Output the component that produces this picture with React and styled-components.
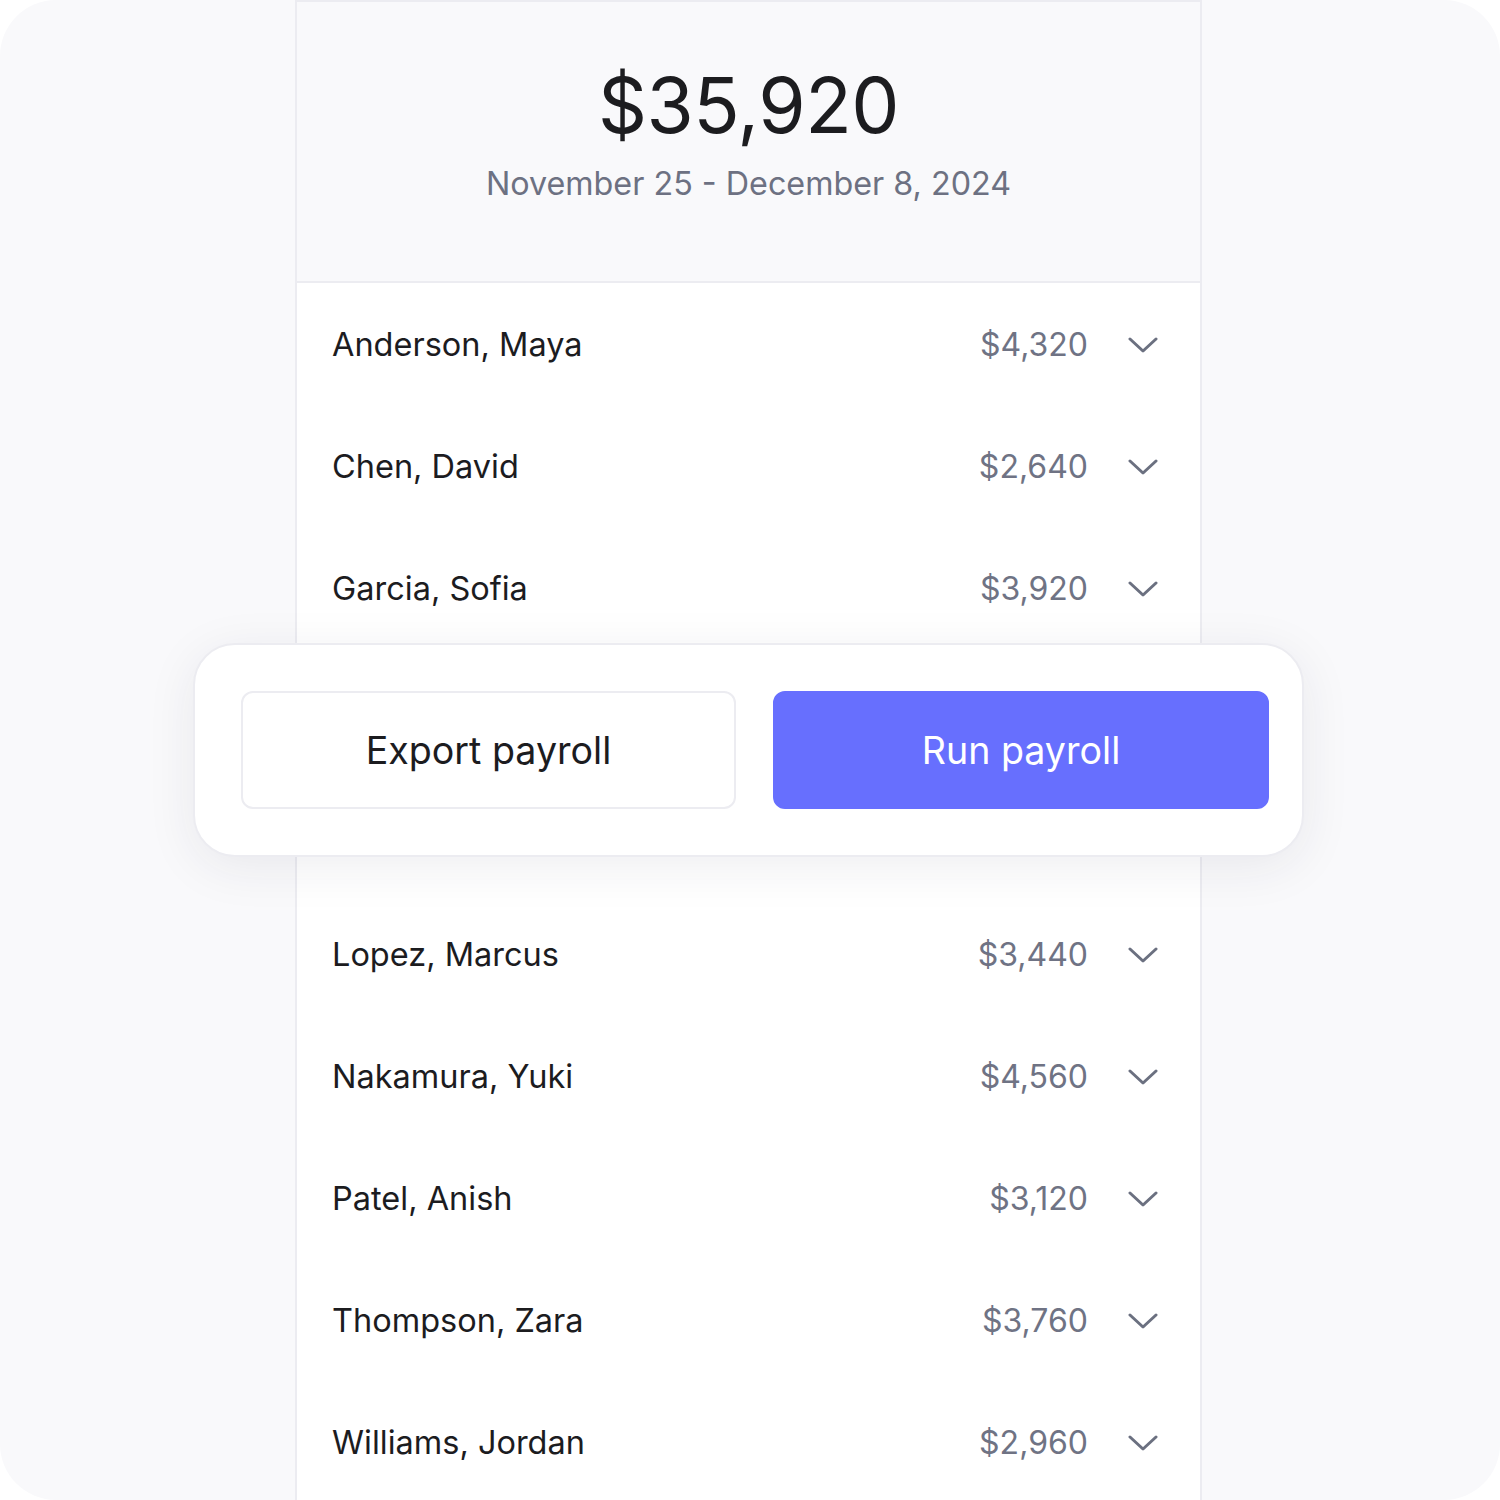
import React from "react"
import styled, { createGlobalStyle } from "styled-components"

const GlobalStyle = createGlobalStyle`
  html, body {
    margin: 0;
    padding: 0;
    background: #ffffff;
  }
  body {
    font-family: Inter, "Noto Sans", sans-serif;
  }
`

const borderColor = "#ececf1"

const Page = styled.div`
  position: relative;
  width: 1500px;
  height: 1500px;
  background: #f9f9fb;
  border-radius: 56px;
  overflow: hidden;
`

const Sheet = styled.div`
  width: 903px;
  margin-left: 295px;
  border: 2px solid ${borderColor};
  border-bottom: none;
  background: #ffffff;
  min-height: 1498px;
`

const Summary = styled.div`
  height: 281px;
  background: #f9f9fb;
  border-bottom: 2px solid ${borderColor};
  display: flex;
  flex-direction: column;
  align-items: center;
  box-sizing: border-box;
`

const Total = styled.div`
  margin-top: 58px;
  font-size: 76.5px;
  line-height: 90px;
  font-weight: 400;
  color: #1c1c1f;
  letter-spacing: -0.5px;
`

const Period = styled.div`
  margin-top: 14px;
  font-size: 32.3px;
  line-height: 40px;
  color: #6d7182;
`

const List = styled.div`
  display: flex;
  flex-direction: column;
`

const Row = styled.div`
  height: 122px;
  display: flex;
  align-items: center;
  padding: 0 42px 0 35px;
`

const Name = styled.div`
  flex: 1;
  font-size: 32.5px;
  color: #1c1c1f;
`

const Amount = styled.div`
  font-size: 32px;
  color: #6f7384;
  text-align: right;
`

const Chevron = styled.svg`
  width: 30px;
  height: 18px;
  margin-left: 40px;
  margin-top: 2px;
  flex: none;
`

const ActionBar = styled.div`
  position: absolute;
  top: 643px;
  left: 193px;
  width: 1111px;
  height: 214px;
  box-sizing: border-box;
  padding: 46px 33px 46px 46px;
  display: grid;
  grid-template-columns: 495px 496px;
  gap: 37px;
  background: #ffffff;
  border: 2px solid ${borderColor};
  border-radius: 42px;
  box-shadow: 0 10px 50px rgba(40, 40, 70, 0.08);
`

const Button = styled.button`
  height: 118px;
  border-radius: 12px;
  font-family: Inter, "Noto Sans", sans-serif;
  font-size: 37.6px;
  font-weight: 400;
  cursor: pointer;
  border: 2px solid ${(p) => (p.$primary ? "#676ffe" : borderColor)};
  background: ${(p) => (p.$primary ? "#676ffe" : "#ffffff")};
  color: ${(p) => (p.$primary ? "#ffffff" : "#1c1c1f")};
`

const people = [
  ["Anderson, Maya", "$4,320"],
  ["Chen, David", "$2,640"],
  ["Garcia, Sofia", "$3,920"],
  ["Johnson, Emily", "$3,280"],
  ["Kim, Daniel", "$3,960"],
  ["Lopez, Marcus", "$3,440"],
  ["Nakamura, Yuki", "$4,560"],
  ["Patel, Anish", "$3,120"],
  ["Thompson, Zara", "$3,760"],
  ["Williams, Jordan", "$2,960"],
]

export default function App() {
  return (
    <>
      <GlobalStyle />
      <Page>
        <Sheet>
          <Summary>
            <Total>$35,920</Total>
            <Period>November 25 - December 8, 2024</Period>
          </Summary>
          <List>
            {people.map(([name, amount]) => (
              <Row key={name}>
                <Name>{name}</Name>
                <Amount>{amount}</Amount>
                <Chevron viewBox="0 0 30 18" fill="none">
                  <polyline
                    points="2,3 15,15 28,3"
                    stroke="#6b7080"
                    strokeWidth="3"
                    strokeLinecap="round"
                    strokeLinejoin="round"
                  />
                </Chevron>
              </Row>
            ))}
          </List>
        </Sheet>
        <ActionBar>
          <Button>Export payroll</Button>
          <Button $primary>Run payroll</Button>
        </ActionBar>
      </Page>
    </>
  )
}
